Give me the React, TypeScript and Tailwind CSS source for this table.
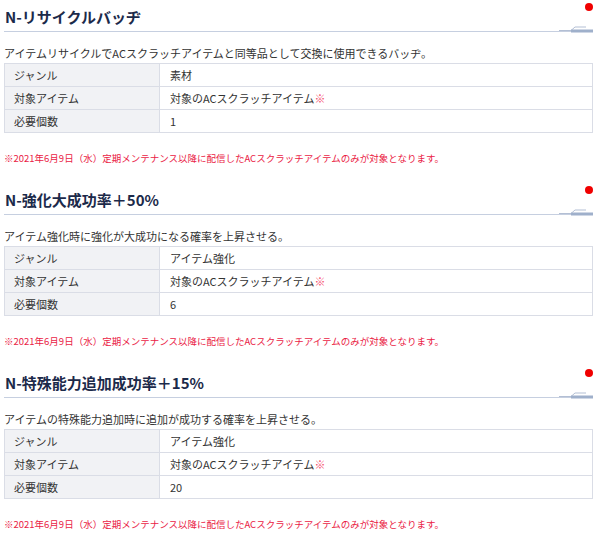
import React from 'react';

interface Row {
  label: string;
  value: string;
  mark?: boolean;
}

interface Badge {
  title: string;
  desc: string;
  rows: Row[];
}

const NOTE = '※2021年6月9日（水）定期メンテナンス以降に配信したACスクラッチアイテムのみが対象となります。';

const badges: Badge[] = [
  {
    title: 'N-リサイクルバッヂ',
    desc: 'アイテムリサイクルでACスクラッチアイテムと同等品として交換に使用できるバッヂ。',
    rows: [
      { label: 'ジャンル', value: '素材' },
      { label: '対象アイテム', value: '対象のACスクラッチアイテム', mark: true },
      { label: '必要個数', value: '1' },
    ],
  },
  {
    title: 'N-強化大成功率＋50%',
    desc: 'アイテム強化時に強化が大成功になる確率を上昇させる。',
    rows: [
      { label: 'ジャンル', value: 'アイテム強化' },
      { label: '対象アイテム', value: '対象のACスクラッチアイテム', mark: true },
      { label: '必要個数', value: '6' },
    ],
  },
  {
    title: 'N-特殊能力追加成功率＋15%',
    desc: 'アイテムの特殊能力追加時に追加が成功する確率を上昇させる。',
    rows: [
      { label: 'ジャンル', value: 'アイテム強化' },
      { label: '対象アイテム', value: '対象のACスクラッチアイテム', mark: true },
      { label: '必要個数', value: '20' },
    ],
  },
];

const Heading: React.FC<{ title: string }> = ({ title }) => (
  <div className="relative">
    <h2 className="pt-[8px] pb-[5px] pl-[1px] text-[15px] leading-[18px] font-bold text-[#1c2a4a]">{title}</h2>
    <div className="h-px bg-[#c6cfe0]" />
    <span className="absolute right-[0px] top-[3px] w-[8px] h-[8px] rounded-full bg-[#f00000]" />
    <svg className="absolute right-[0px] bottom-[-1px]" width="34" height="8" viewBox="0 0 34 8">
      <path d="M0 5.5 H12 L16 2 H27" fill="none" stroke="#b3bfd4" strokeWidth="1" />
      <rect x="12" y="4.5" width="22" height="3" fill="#9fb0cb" />
    </svg>
  </div>
);

const App: React.FC = () => {
  return (
    <div className="w-[600px] pl-[4px] pr-[7px] bg-white font-['Noto_Sans_CJK_JP',sans-serif] text-[#333]">
      {badges.map(badge => (
        <section key={badge.title} className="pb-[19px]">
          <Heading title={badge.title} />
          <p className="mt-[14px] text-[11px] leading-[14px]">{badge.desc}</p>
          <table className="mt-[3px] w-full border-collapse text-[11px]">
            <tbody>
              {badge.rows.map(row => (
                <tr key={row.label}>
                  <td className="w-[155px] h-[23px] border border-[#dadde6] bg-[#f1f2f5] pl-[9px] align-middle">
                    {row.label}
                  </td>
                  <td className="h-[23px] border border-[#dadde6] pl-[10px] align-middle">
                    {row.value}
                    {row.mark && <span className="text-[#f5506e]">※</span>}
                  </td>
                </tr>
              ))}
            </tbody>
          </table>
          <p className="mt-[19px] text-[9.5px] leading-[12px] text-[#ea1a44]">{NOTE}</p>
        </section>
      ))}
    </div>
  );
};

export default App;
